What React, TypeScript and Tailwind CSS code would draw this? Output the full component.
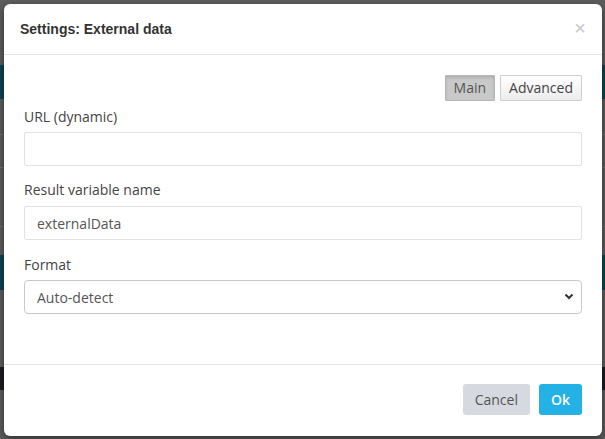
import { useState } from 'react'

export default function App() {
  const [tab, setTab] = useState<'main' | 'advanced'>('main')
  const [url, setUrl] = useState('')
  const [varName, setVarName] = useState('externalData')
  const [format, setFormat] = useState('auto')

  return (
    <div className="relative w-[605px] h-[439px] overflow-hidden bg-[#5e5e5e] font-['Open_Sans',sans-serif]">
      {/* page behind the backdrop */}
      <div className="absolute inset-0 flex flex-col">
        <div className="h-[65px]" />
        <div className="h-[34px] bg-[#0f4456]" />
        <div className="h-[36px] border-b border-[#707070]" />
        <div className="h-[33px] border-b border-[#707070]" />
        <div className="h-[59px] border-b border-[#707070]" />
        <div className="h-[28px]" />
        <div className="h-[35px] bg-[#0f4456]" />
        <div className="h-[77px]" />
        <div className="h-[23px] bg-[#1b1e22]" />
      </div>

      {/* Modal */}
      <div className="relative ml-[4px] mt-[4px] w-[598px] h-[432px] bg-white rounded-[6px] shadow-[0_3px_9px_rgba(0,0,0,0.5)] flex flex-col">
        {/* Header */}
        <div className="h-[51px] flex items-center justify-between pl-[16px] pr-[16px] border-b border-[#e5e5e5]">
          <h4 className="text-[14px] font-bold text-[#333] font-['Liberation_Sans',Arial,sans-serif]">
            Settings: External data
          </h4>
          <button className="text-[20px] leading-none text-[#c8c8c8] font-['Liberation_Sans',Arial,sans-serif] -mt-[3px]">×</button>
        </div>

        {/* Body */}
        <div className="flex-1 px-[20px] pt-[20px] flex flex-col">
          <div className="flex justify-end gap-[5px]">
            <button
              onClick={() => setTab('main')}
              className={`h-[26px] px-[8px] text-[14px] leading-none border rounded-[1px]
                ${tab === 'main'
                  ? 'bg-[#c9c9c9] border-[#b5b5b5] text-[#555] shadow-[inset_0_2px_3px_rgba(0,0,0,0.12)]'
                  : 'bg-gradient-to-b from-white to-[#ececec] border-[#cfcfcf] text-[#444]'}`}
            >
              Main
            </button>
            <button
              onClick={() => setTab('advanced')}
              className={`h-[26px] px-[8px] text-[14px] leading-none border rounded-[1px]
                ${tab === 'advanced'
                  ? 'bg-[#c9c9c9] border-[#b5b5b5] text-[#555] shadow-[inset_0_2px_3px_rgba(0,0,0,0.12)]'
                  : 'bg-gradient-to-b from-white to-[#ececec] border-[#cfcfcf] text-[#444]'}`}
            >
              Advanced
            </button>
          </div>

          <label className="mt-[6px] text-[14px] leading-[20px] text-[#444]">URL (dynamic)</label>
          <input
            value={url}
            onChange={e => setUrl(e.target.value)}
            className="mt-[5px] h-[34px] w-full border border-[#e2e2e2] rounded-[2px] px-[12px] text-[14px] text-[#555] outline-none"
          />

          <label className="mt-[14px] text-[14px] leading-[20px] text-[#444]">Result variable name</label>
          <input
            value={varName}
            onChange={e => setVarName(e.target.value)}
            className="mt-[6px] h-[34px] w-full border border-[#e2e2e2] rounded-[2px] px-[12px] text-[14px] text-[#555] outline-none"
          />

          <label className="mt-[15px] text-[14px] leading-[20px] text-[#444]">Format</label>
          <div className="relative mt-[5px]">
            <select
              value={format}
              onChange={e => setFormat(e.target.value)}
              className="appearance-none h-[34px] w-full border border-[#c8c8c8] rounded-[4px] pl-[12px] pr-[30px] text-[14px] text-[#555] bg-white outline-none"
            >
              <option value="auto">Auto-detect</option>
              <option value="json">JSON</option>
              <option value="text">Text</option>
            </select>
            <svg className="pointer-events-none absolute right-[8px] top-[13px]" width="10" height="7" viewBox="0 0 10 7">
              <path d="M1.5 1.5 L5 5 L8.5 1.5" fill="none" stroke="#333" strokeWidth="2" />
            </svg>
          </div>
        </div>

        {/* Footer */}
        <div className="border-t border-[#e5e5e5] pt-[19px] pb-[21px] pr-[20px] flex justify-end gap-[9px]">
          <button className="h-[31px] px-[12px] bg-[#d6d9df] text-[#555] text-[14px] rounded-[3px]">Cancel</button>
          <button className="h-[31px] px-[12px] bg-[#23b1e6] text-white text-[14px] font-semibold rounded-[3px]">Ok</button>
        </div>
      </div>
    </div>
  )
}
